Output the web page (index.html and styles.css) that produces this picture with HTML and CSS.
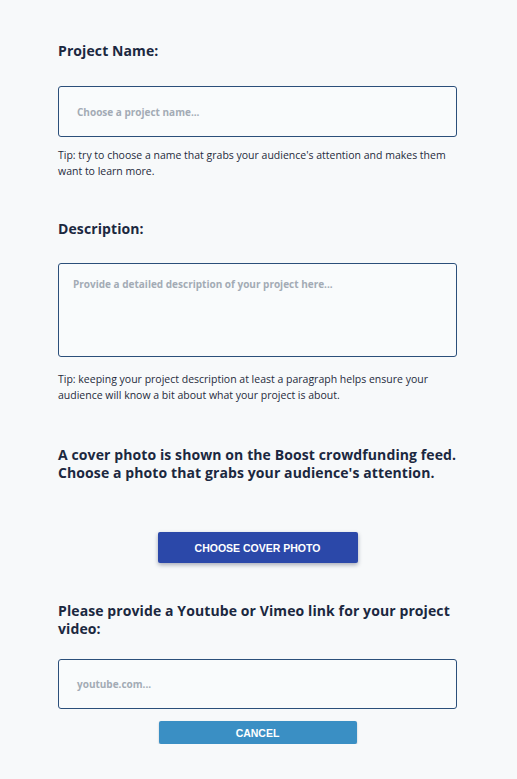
FILE: index.html
```html
<!DOCTYPE html>
<html>
<head>
<meta charset="utf-8">
<link rel="stylesheet" href="styles.css">
</head>
<body>
<main class="form">
  <section class="field field-name">
    <h2 class="label">Project Name:</h2>
    <div class="input input-short"><span class="placeholder">Choose a project name...</span></div>
    <p class="tip">Tip: try to choose a name that grabs your audience's attention and makes them want to learn more.</p>
  </section>
  <section class="field field-desc">
    <h2 class="label">Description:</h2>
    <div class="input input-area"><span class="placeholder">Provide a detailed description of your project here...</span></div>
    <p class="tip tip-desc">Tip: keeping your project description at least a paragraph helps ensure your audience will know a bit about what your project is about.</p>
  </section>
  <section class="field field-cover">
    <h2 class="label">A cover photo is shown on the Boost crowdfunding feed. Choose a photo that grabs your audience's attention.</h2>
    <div class="btn-row"><button class="btn btn-cover">CHOOSE COVER PHOTO</button></div>
  </section>
  <section class="field field-video">
    <h2 class="label">Please provide a Youtube or Vimeo link for your project video:</h2>
    <div class="input input-short input-video"><span class="placeholder">youtube.com...</span></div>
    <div class="btn-row btn-row-cancel"><button class="btn btn-cancel">CANCEL</button></div>
  </section>
</main>
</body>
</html>
```
FILE: styles.css
```css
html, body {
  margin: 0;
  padding: 0;
  background: #f7f9fa;
}
body {
  font-family: "Open Sans", "Liberation Sans", sans-serif;
  color: #1d2a3f;
}
.form {
  width: 399px;
  padding: 42px 0 0 58px;
  display: flex;
  flex-direction: column;
}
.label {
  margin: 0;
  font-size: 14px;
  line-height: 18px;
  font-weight: 700;
  color: #1b2840;
  letter-spacing: 0.1px;
}
.input {
  box-sizing: border-box;
  border: 1px solid #2b4f7a;
  border-radius: 3px;
  background: #f9fbfc;
  display: flex;
}
.input-short {
  height: 51px;
  align-items: center;
  padding-left: 18px;
  margin-top: 26px;
}
.input-video {
  margin-top: 21px;
  height: 50px;
}
.input-area {
  height: 94px;
  align-items: flex-start;
  padding: 13px 14px;
  margin-top: 25px;
}
.placeholder {
  font-size: 10px;
  font-weight: 700;
  color: #a3abb5;
}
.tip {
  margin: 10px 0 0;
  font-size: 10.5px;
  line-height: 16px;
  color: #1f2b3c;
}
.tip-desc {
  margin-top: 14px;
}
.field-desc {
  margin-top: 41px;
}
.field-cover {
  margin-top: 43px;
}
.btn-row {
  display: flex;
  justify-content: center;
  width: 399px;
}
.btn {
  border: none;
  font-family: "Liberation Sans", Arial, sans-serif;
  font-weight: 700;
  color: #ffffff;
  border-radius: 2px;
  padding: 0;
  font-size: 10.5px;
}
.btn-cover {
  margin-top: 50px;
  width: 200px;
  height: 31px;
  background: #2b48a9;
  box-shadow: 0 2px 4px rgba(20, 30, 60, 0.35);
}
.field-video {
  margin-top: 39px;
}
.btn-row-cancel {
  margin-top: 12px;
}
.btn-cancel {
  width: 198px;
  height: 23px;
  background: #3a8fc4;
  box-shadow: 0 1px 2px rgba(20, 30, 60, 0.25);
}
```
